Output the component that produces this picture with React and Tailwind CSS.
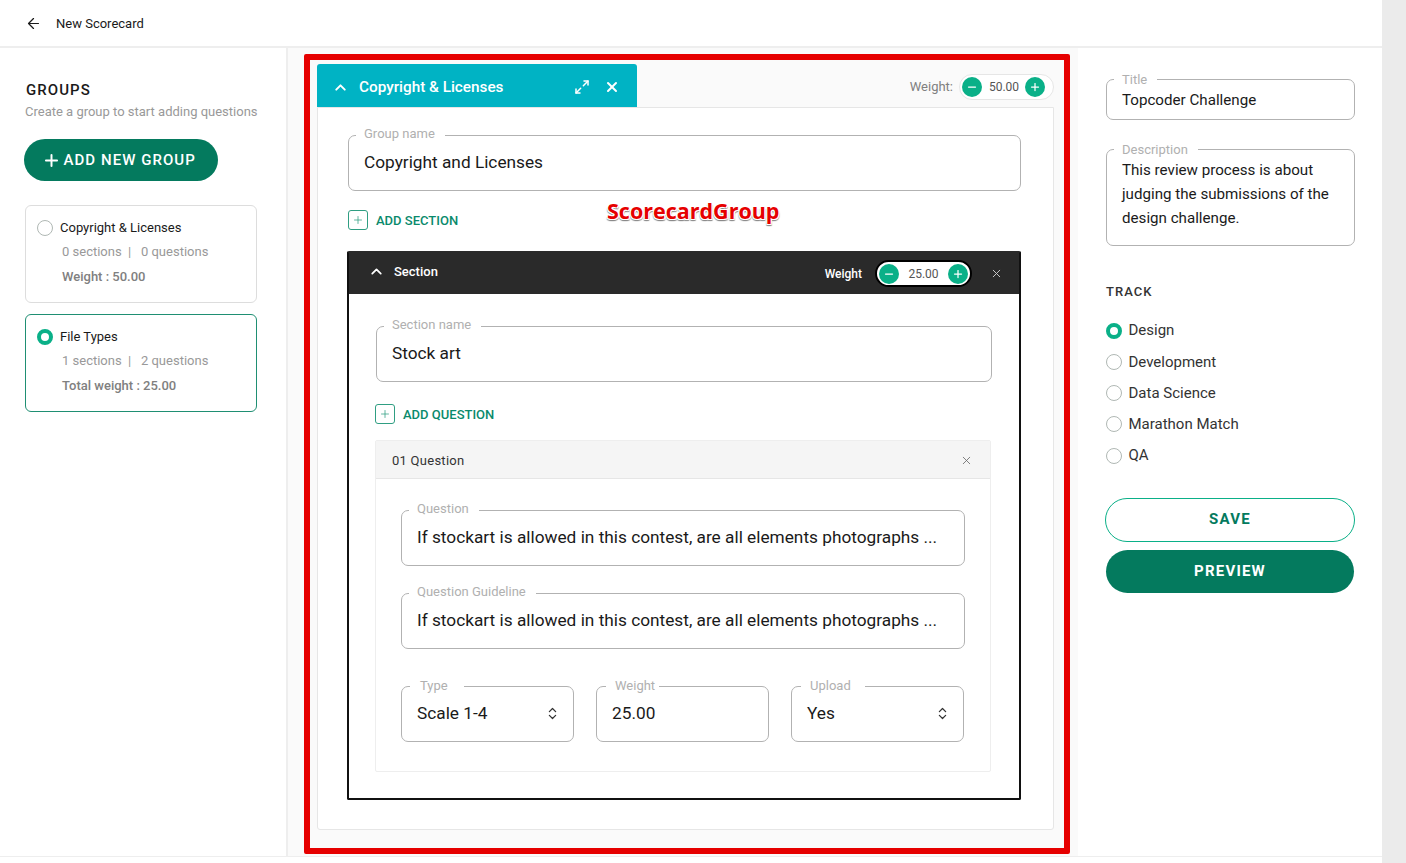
import { ArrowLeft, ChevronUp, ChevronsUpDown, Maximize2, Minus, Plus, X } from "lucide-react";

const tracks = ["Design", "Development", "Data Science", "Marathon Match", "QA"];

// campo com legenda cortando a borda
function Field({ label, className = "", legendClass = "ml-[7px] pl-2 pr-[10px] -top-px", children }) {
  return (
    <fieldset className={`border border-[#b2b2b2] rounded-[7px] min-w-0 ${className}`}>
      <legend className={`relative text-[13px] leading-[16px] text-[#b0b0b0] ${legendClass}`}>{label}</legend>
      {children}
    </fieldset>
  );
}

function Radio({ checked }) {
  return checked ? (
    <span className="block w-4 h-4 rounded-full border-[4px] border-[#0ab088] bg-white shrink-0" />
  ) : (
    <span className="block w-4 h-4 rounded-full border border-[#b0b8b4] bg-white shrink-0" />
  );
}

function GroupCard({ name, stats, weight, active, className = "" }) {
  return (
    <div className={`w-[232px] h-[98px] rounded-[6px] border bg-white pl-[11px] pt-[14px] ${active ? "border-[#1f8f73]" : "border-[#dddddd]"} ${className}`}>
      <div className="flex items-center gap-[7px]">
        <Radio checked={active} />
        <span className="text-[13px] leading-4 text-[#1a1a1a]">{name}</span>
      </div>
      <div className="mt-2 ml-[25px] text-[13px] leading-4 text-[#999999] whitespace-pre">{stats}</div>
      <div className="mt-[9px] ml-[25px] text-[13px] leading-4 font-medium text-[#808080]">{weight}</div>
    </div>
  );
}

function Stepper({ value, dark }) {
  return (
    <div className={`flex items-center justify-between rounded-full bg-white ${dark ? "w-[97px] h-[27px] border-2 border-black pl-[2px] pr-[2px]" : "w-[95px] h-[26px] border border-[#e6e6e6] pl-[2px] pr-[8px]"}`}>
      <span className="flex items-center justify-center w-[20px] h-[20px] rounded-full bg-[#0ab088] text-white">
        <Minus size={12} strokeWidth={2.5} />
      </span>
      <span className={`text-[12px] text-[#555555] ${dark ? "" : "pl-[1px]"}`}>{value}</span>
      <span className="flex items-center justify-center w-[20px] h-[20px] rounded-full bg-[#0ab088] text-white">
        <Plus size={12} strokeWidth={2.5} />
      </span>
    </div>
  );
}

function AddButton({ children, className = "" }) {
  return (
    <div className={`flex items-center gap-2 h-5 ${className}`}>
      <span className="flex items-center justify-center w-5 h-5 rounded-[3px] border border-[#2f9e82] text-[#2f9e82]">
        <Plus size={12} strokeWidth={1.5} />
      </span>
      <span className="pt-[1px] text-[13px] leading-4 font-medium text-[#0a8a6c]">{children}</span>
    </div>
  );
}

export default function App() {
  const inputText = "px-[15px] pt-[5px] text-[17.25px] leading-[28px] text-[#1a1a1a] whitespace-nowrap";
  return (
    <div className="relative flex h-[863px] w-[1406px] overflow-hidden bg-white text-[#1a1a1a] font-['Roboto',sans-serif]">
      <div className="flex flex-col w-[1382px]">
        <header className="flex items-center h-[48px] border-b-2 border-[#eeeeee] pl-[25px] pt-[1px] shrink-0">
          <ArrowLeft size={17} strokeWidth={1.75} />
          <span className="ml-[14px] text-[13px] text-[#1a1a1a]">New Scorecard</span>
        </header>

        <div className="flex h-[809px] border-b border-[#eeeeee]">
          {/* grupos */}
          <aside className="w-[288px] shrink-0 border-r-2 border-[#eeeeee] pl-[25px]">
            <h2 className="mt-[33px] ml-[1px] text-[15px] leading-[18px] font-medium tracking-[0.07em] text-[#1a1a1a]">GROUPS</h2>
            <p className="mt-[5px] text-[13px] leading-[16px] text-[#999999] whitespace-nowrap">Create a group to start adding questions</p>
            <button className="flex items-center mt-[19px] -ml-[1px] w-[194px] h-[42px] pl-[18px] rounded-full bg-[#047a5e] text-white text-[15px] font-medium tracking-[0.07em]">
              <Plus size={19} strokeWidth={2.5} className="mr-[2.5px]" />
              ADD NEW GROUP
            </button>
            <GroupCard className="mt-6" name="Copyright & Licenses" stats={"0 sections  |   0 questions"} weight="Weight : 50.00" />
            <GroupCard className="mt-[11px]" active name="File Types" stats={"1 sections  |   2 questions"} weight="Total weight : 25.00" />
          </aside>

          {/* area central */}
          <main className="w-[790px] shrink-0 bg-[#fafafa] pl-[29px] pr-[24px] pt-[16px]">
            <div className="flex items-center justify-between h-[43px]">
              <div className="flex items-center w-[320px] h-[43px] rounded-t-[3px] bg-[#00b3c4] text-white pl-[15px] pt-[3px]">
                <ChevronUp size={17} strokeWidth={2.75} />
                <span className="ml-[10px] text-[15.3px] font-medium">Copyright &amp; Licenses</span>
                <Maximize2 size={16} strokeWidth={2.25} className="ml-[71px]" />
                <X size={16} strokeWidth={3} className="ml-[14px] -mt-[1px]" />
              </div>
              <div className="flex items-center gap-[6px] pt-[2px]">
                <span className="text-[13px] text-[#808080]">Weight:</span>
                <Stepper value="50.00" />
              </div>
            </div>

            <div className="h-[723px] w-[737px] rounded-b-[3px] border border-[#e6e6e6] bg-white pl-[30px] pt-[19px]">
              <Field label="Group name" className="w-[673px] h-[64px]">
                <div className={inputText}>Copyright and Licenses</div>
              </Field>
              <AddButton className="mt-[19px]">ADD SECTION</AddButton>

              {/* secao */}
              <div className="mt-[21px] -ml-[1px] w-[674px] h-[549px] rounded-[2px] border-2 border-[#111111] border-t-[#2a2a2a] bg-white">
                <div className="flex items-center h-[41px] bg-[#2a2a2a] text-white pl-[19px] pr-[16px]">
                  <ChevronUp size={17} strokeWidth={2.5} className="-mt-[4px]" />
                  <span className="ml-[9px] -mt-[4px] text-[13px] font-medium">Section</span>
                  <span className="ml-auto text-[12px] font-medium">Weight</span>
                  <div className="ml-[13px]"><Stepper value="25.00" dark /></div>
                  <X size={13} strokeWidth={1.75} className="ml-[18px] text-[#cccccc]" />
                </div>

                <div className="pl-[27px] pt-[24px]">
                  <Field label="Section name" className="w-[616px] h-[64px]">
                    <div className={inputText}>Stock art</div>
                  </Field>
                  <AddButton className="mt-[22px] -ml-[1px]">ADD QUESTION</AddButton>

                  <div className="mt-[16px] -ml-[1px] w-[616px] h-[332px] rounded-[2px] border border-[#eeeeee]">
                    <div className="flex items-center justify-between h-[38px] bg-[#f5f5f5] border-b border-[#e6e6e6] pl-4 pr-[17px] pt-[2px]">
                      <span className="text-[13px] tracking-[0.02em] text-[#333333]">01 Question</span>
                      <X size={13} strokeWidth={1.5} className="text-[#666666]" />
                    </div>
                    <div className="pl-[25px] pt-[23px]">
                      <Field label="Question" className="w-[564px] h-[64px]">
                        <div className={inputText}>If stockart is allowed in this contest, are all elements photographs ...</div>
                      </Field>
                      <Field label="Question Guideline" className="mt-[19px] w-[564px] h-[64px]">
                        <div className={inputText}>If stockart is allowed in this contest, are all elements photographs ...</div>
                      </Field>
                      <div className="flex gap-[22px] mt-[29px]">
                        <Field label="Type" legendClass="ml-[8px] pl-[10px] pr-4" className="w-[173px] h-[64px]">
                          <div className={`flex items-center justify-between ${inputText}`}>
                            Scale 1-4
                            <ChevronsUpDown size={15} strokeWidth={2} className="-mr-[2px] text-[#333333]" />
                          </div>
                        </Field>
                        <Field label="Weight" legendClass="ml-[9px] pl-[9px] pr-1" className="w-[173px] h-[64px]">
                          <div className={inputText}>25.00</div>
                        </Field>
                        <Field label="Upload" legendClass="ml-[9px] pl-[9px] pr-[14px]" className="w-[173px] h-[64px]">
                          <div className={`flex items-center justify-between ${inputText}`}>
                            Yes
                            <ChevronsUpDown size={15} strokeWidth={2} className="-mr-[2px] text-[#333333]" />
                          </div>
                        </Field>
                      </div>
                    </div>
                  </div>
                </div>
              </div>
            </div>
          </main>

          {/* detalhes */}
          <aside className="flex-1 pl-[28px] pr-[28px] pt-[23px]">
            <Field label="Title" legendClass="ml-[7px] pl-2 pr-[10px] top-px" className="h-[49px]">
              <div className="px-[15px] pt-[1px] text-[15.15px] leading-[24px] text-[#1a1a1a]">Topcoder Challenge</div>
            </Field>
            <Field label="Description" legendClass="ml-[7px] pl-2 pr-[10px] top-px" className="mt-[21px] h-[105px]">
              <div className="px-[15px] pt-[1px] text-[15.15px] leading-[24px] text-[#1a1a1a]">This review process is about judging the submissions of the design challenge.</div>
            </Field>
            <h3 className="mt-[38px] text-[13px] leading-4 font-medium tracking-[0.08em] text-[#333333]">TRACK</h3>
            <div className="mt-[20.5px] flex flex-col gap-[11.25px]">
              {tracks.map((track, i) => (
                <div key={track} className="flex items-center gap-[6.5px] h-5">
                  <Radio checked={i === 0} />
                  <span className="text-[15px] text-[#333333]">{track}</span>
                </div>
              ))}
            </div>
            <button className="mt-[32px] -ml-[1px] w-[250px] h-[44px] rounded-full border border-[#0ab088] text-[#047a5e] text-[15px] font-bold tracking-[0.08em]">SAVE</button>
            <button className="block mt-[8px] w-[248px] h-[43px] pt-[1px] rounded-full bg-[#047a5e] text-white text-[15px] font-bold tracking-[0.08em]">PREVIEW</button>
          </aside>
        </div>
      </div>
      <div className="w-[24px] bg-[#ebebeb]" />

      {/* anotacao vermelha por cima da tela */}
      <div className="absolute left-[304px] top-[54px] w-[766px] h-[800px] rounded-[2px] border-[6px] border-[#e60000] pointer-events-none" />
      <span className="absolute left-[607px] top-[197px] text-[21.5px] leading-[28px] font-bold text-[#e60000] font-['Open_Sans',sans-serif] [text-shadow:1px_1px_0_#fff,-1px_-1px_0_#fff,1px_-1px_0_#fff,-1px_1px_0_#fff,1px_2px_1px_#888,-1px_2px_1px_#888]">ScorecardGroup</span>
    </div>
  );
}
